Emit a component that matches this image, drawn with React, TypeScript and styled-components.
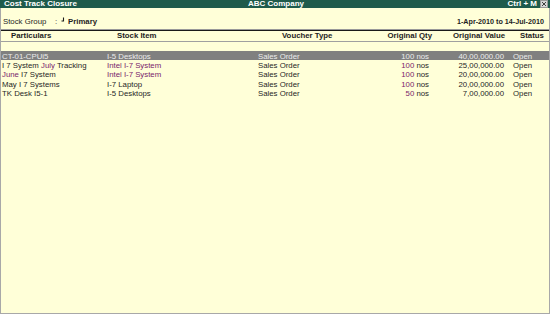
import React from "react";
import styled, { createGlobalStyle } from "styled-components";

interface Voucher {
  particulars: React.ReactNode;
  item: string;
  itemPurple?: boolean;
  type: string;
  qty: number;
  value: string;
  status: string;
}

const purple = "#7a1c6c";
const ink = "#262626";

const GlobalStyle = createGlobalStyle`
  html, body {
    margin: 0;
    padding: 0;
    background: #ffffd8;
  }
  body {
    font-family: "Liberation Sans", Arial, sans-serif;
    font-size: 7.8px;
    color: ${ink};
  }
`;

const Screen = styled.div`
  width: 550px;
  height: 314px;
  box-sizing: border-box;
  background: #ffffd8;
  border-left: 1px solid #a8a8a8;
  border-right: 1px solid #a8a8a8;
  border-bottom: 1px solid #a8a8a8;
  display: flex;
  flex-direction: column;
`;

const TitleBar = styled.div`
  height: 8px;
  background: #1f5b4b;
  color: #ffffff;
  font-weight: bold;
  font-size: 8px;
  line-height: 8px;
  display: grid;
  grid-template-columns: 1fr auto 1fr;
  align-items: center;
  padding: 0 2px 0 4px;
  margin: 0 -1px;
  overflow: hidden;
`;

const TitleRight = styled.div`
  display: flex;
  justify-content: flex-end;
  align-items: center;
  gap: 3px;
`;

const CloseBox = styled.span`
  width: 6px;
  height: 6px;
  background: #d8d8d8;
  border: 1px solid #9a9a9a;
  display: inline-flex;
`;

const InfoRow = styled.div`
  height: 21px;
  display: flex;
  align-items: center;
  justify-content: space-between;
  padding: 5px 5px 0 2px;
  box-sizing: border-box;
`;

const InfoLeft = styled.div`
  display: flex;
  align-items: center;
`;

const Label = styled.span`
  width: 52px;
`;

const Colon = styled.span`
  width: 5px;
`;

const Strong = styled.span`
  font-weight: bold;
  color: #1e1e1e;
`;

const Period = styled(Strong)`
  font-size: 7.2px;
`;

const Cols = "105px 151px 100px 74px 74px 1fr";

const HeaderRow = styled.div`
  display: grid;
  grid-template-columns: ${Cols};
  height: 10px;
  line-height: 10px;
  border-top: 1px solid #9a9a9a;
  box-shadow: inset 0 1px 0 #1a1a1a;
  padding-top: 1px;
  border-bottom: 1px solid #a0a0a0;
  font-weight: bold;
  color: #1e1e1e;
  padding-left: 1px;
`;

const HeadCell = styled.div<{ $right?: boolean; $pad?: number }>`
  text-align: ${(p) => (p.$right ? "right" : "left")};
  padding-left: ${(p) => (p.$right ? 0 : p.$pad ?? 0)}px;
  padding-right: ${(p) => (p.$right ? p.$pad ?? 0 : 0)}px;
  white-space: nowrap;
`;

const Body = styled.div`
  padding-top: 8.5px;
  display: flex;
  flex-direction: column;
`;

const Row = styled.div<{ $selected?: boolean }>`
  display: grid;
  grid-template-columns: ${Cols};
  height: 9.4px;
  line-height: 11px;
  padding-left: 1px;
  background: ${(p) => (p.$selected ? "#808080" : "transparent")};
  color: ${(p) => (p.$selected ? "#ececec" : ink)};
`;

const Cell = styled.div<{ $right?: boolean; $pad?: number; $tone?: string }>`
  text-align: ${(p) => (p.$right ? "right" : "left")};
  padding-left: ${(p) => (p.$right ? 0 : p.$pad ?? 0)}px;
  padding-right: ${(p) => (p.$right ? p.$pad ?? 0 : 0)}px;
  white-space: nowrap;
  ${(p) => (p.$tone ? `color: ${p.$tone};` : "")}
`;

const Mark = styled.span<{ $on: boolean }>`
  color: ${(p) => (p.$on ? purple : "inherit")};
`;

const vouchers: Voucher[] = [
  { particulars: "CT-01-CPUi5", item: "I-5 Desktops", type: "Sales Order", qty: 100, value: "40,00,000.00", status: "Open" },
  {
    particulars: (
      <>
        I 7 System <span style={{ color: purple }}>July</span> Tracking
      </>
    ),
    item: "Intel I-7 System",
    itemPurple: true,
    type: "Sales Order",
    qty: 100,
    value: "25,00,000.00",
    status: "Open",
  },
  {
    particulars: (
      <>
        <span style={{ color: purple }}>June</span> I7 System
      </>
    ),
    item: "Intel I-7 System",
    itemPurple: true,
    type: "Sales Order",
    qty: 100,
    value: "20,00,000.00",
    status: "Open",
  },
  { particulars: "May I 7 Systems", item: "I-7 Laptop", type: "Sales Order", qty: 100, value: "20,00,000.00", status: "Open" },
  { particulars: "TK Desk I5-1", item: "I-5 Desktops", type: "Sales Order", qty: 50, value: "7,00,000.00", status: "Open" },
];

const App = () => {
  return (
    <>
      <GlobalStyle />
      <Screen>
        <TitleBar>
          <span>Cost Track Closure</span>
          <span>ABC Company</span>
          <TitleRight>
            <span>Ctrl + M</span>
            <CloseBox>
              <svg width="6" height="6" viewBox="0 0 6 6">
                <path d="M1 1 L5 5 M5 1 L1 5" stroke="#404040" strokeWidth="1" />
              </svg>
            </CloseBox>
          </TitleRight>
        </TitleBar>
        <InfoRow>
          <InfoLeft>
            <Label>Stock Group</Label>
            <Colon>:</Colon>
            <svg width="8" height="8" viewBox="0 0 8 8">
              <path d="M3.5 0.5 V4 H1.5" stroke="#1a1a1a" strokeWidth="1.1" fill="none" />
            </svg>
            <Strong>Primary</Strong>
          </InfoLeft>
          <Period>1-Apr-2010 to 14-Jul-2010</Period>
        </InfoRow>
        <HeaderRow>
          <HeadCell $pad={9}>Particulars</HeadCell>
          <HeadCell $pad={10}>Stock Item</HeadCell>
          <HeadCell $pad={24}>Voucher Type</HeadCell>
          <HeadCell $right $pad={0}>Original Qty</HeadCell>
          <HeadCell $right $pad={1}>Original Value</HeadCell>
          <HeadCell $pad={14}>Status</HeadCell>
        </HeaderRow>
        <Body>
          {vouchers.map((v, i) => {
            const sel = i === 0;
            return (
              <Row key={i} $selected={sel}>
                <Cell>{v.particulars}</Cell>
                <Cell $tone={!sel && v.itemPurple ? purple : undefined}>{v.item}</Cell>
                <Cell>{v.type}</Cell>
                <Cell $right $pad={3}>
                  <Mark $on={!sel}>{v.qty}</Mark> nos
                </Cell>
                <Cell $right $pad={2}>{v.value}</Cell>
                <Cell $pad={7}>{v.status}</Cell>
              </Row>
            );
          })}
        </Body>
      </Screen>
    </>
  );
};

export default App;
